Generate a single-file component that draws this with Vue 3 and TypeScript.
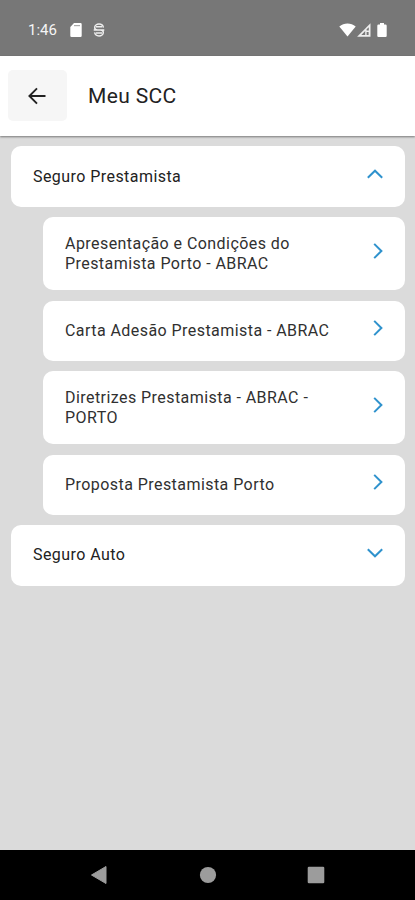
<script setup lang="ts">
import { ref } from 'vue'

interface Group {
  title: string
  items: string[]
}

const groups: Group[] = [
  {
    title: 'Seguro Prestamista',
    items: [
      'Apresentação e Condições do Prestamista Porto - ABRAC',
      'Carta Adesão Prestamista - ABRAC',
      'Diretrizes Prestamista - ABRAC - PORTO',
      'Proposta Prestamista Porto',
    ],
  },
  { title: 'Seguro Auto', items: [] },
]

const openIndex = ref<number>(0)

function toggle(index: number): void {
  openIndex.value = openIndex.value === index ? -1 : index
}
</script>

<template>
  <div class="screen">
    <div class="status">
      <span class="time">1:46</span>
      <svg class="sd" viewBox="0 0 12 14"><path d="M4 0h6.500a1.200 1.200 0 0 1 1.200 1.200v11.600a1.200 1.200 0 0 1-1.200 1.200h-9A1.200 1.200 0 0 1 .3 12.800V4z" fill="#fff" /><path d="M4 2.600h6" stroke="#aaa" stroke-width="1.200" /></svg>
      <svg class="app" viewBox="0 0 12 14" fill="none" stroke="#eee" stroke-width="1.500"><path d="M10.400 4.600C10 2.400 8.300 1.100 6 1.100S1.700 2.500 1.700 4.400C1.700 6 2.800 6.900 4.500 6.900h3c1.700 0 2.800.9 2.800 2.500 0 2-1.900 3.500-4.300 3.500s-4-1.400-4.400-3.500M.7 6.900h10.600M3 3.800h6M3 10.100h6" /></svg>
      <span class="spacer"></span>
      <svg class="wifi" viewBox="0 0 17 14"><path d="M.3 3.500C5-.6 12-.6 16.700 3.500L8.500 13.600z" fill="#fff" /></svg>
      <svg class="signal" viewBox="0 0 14 14"><path d="M13.500.3v13.400H.1z" fill="#eee" /><path d="M8.200 8v4H4.300zM9.600 6.300l2.200-2v3.300H9.600zM9.600 9h2v3h-2z" fill="#777" /></svg>
      <svg class="battery" viewBox="0 0 10 14"><path d="M3 0h4v1.500h1.500A1.200 1.200 0 0 1 9.700 2.700v10A1.200 1.200 0 0 1 8.500 14h-7A1.200 1.200 0 0 1 .3 12.700v-10A1.200 1.200 0 0 1 1.500 1.500H3z" fill="#fff" /></svg>
    </div>

    <header class="header">
      <button class="back" aria-label="Voltar">
        <svg viewBox="0 0 18 18" fill="none" stroke="#222" stroke-width="1.900"><path d="M17.500 9H1.600M9 1.300L1.400 9 9 16.700" /></svg>
      </button>
      <h1>Meu SCC</h1>
    </header>

    <main class="list">
      <template v-for="(group, i) in groups" :key="group.title">
        <button class="card" @click="toggle(i)">
          <span class="label">{{ group.title }}</span>
          <svg class="fold" viewBox="0 0 16 10" fill="none" stroke="#2f92cd" stroke-width="2">
            <path :d="openIndex === i ? 'M.8 8.700L8 1.700l7.200 7' : 'M.8 1.300L8 8.300l7.200-7'" />
          </svg>
        </button>
        <template v-if="openIndex === i">
          <button v-for="item in group.items" :key="item" class="card sub">
            <span class="label">{{ item }}</span>
            <svg class="go" viewBox="0 0 10 16" fill="none" stroke="#2f92cd" stroke-width="2"><path d="M1.200.9L8.400 8l-7.200 7.100" /></svg>
          </button>
        </template>
      </template>
    </main>

    <nav class="nav">
      <svg viewBox="0 0 18 18"><path d="M16 .5v17L1.500 9z" fill="#9c9c9c" stroke="#9c9c9c" stroke-linejoin="round" /></svg>
      <svg viewBox="0 0 18 18"><circle cx="9" cy="9" r="8.100" fill="#9c9c9c" /></svg>
      <svg viewBox="0 0 18 18"><rect x=".7" y=".7" width="16.600" height="16.600" rx="1.300" fill="#9c9c9c" /></svg>
    </nav>
  </div>
</template>

<style>
body {
  margin: 0;
}
</style>

<style scoped>
.screen {
  display: flex;
  flex-direction: column;
  height: 900px;
  background: #dbdbdb;
  font-family: Roboto, 'Liberation Sans', sans-serif;
  color: #222;
}
svg {
  display: block;
  flex: none;
}
button {
  border: 0;
  font: inherit;
  color: inherit;
  text-align: left;
}
.status {
  display: flex;
  align-items: center;
  box-sizing: border-box;
  height: 56px;
  padding: 4px 28px 0;
  background: #777;
  color: #f5f5f5;
}
.time {
  width: 42px;
  font-size: 15px;
  line-height: 18px;
}
.sd {
  width: 12px;
  height: 14px;
}
.app {
  width: 12px;
  height: 14px;
  margin-left: 11px;
}
.spacer {
  flex: 1;
}
.wifi {
  width: 17px;
  height: 14px;
}
.signal {
  width: 14px;
  height: 14px;
  margin-left: 1px;
}
.battery {
  width: 10px;
  height: 14px;
  margin-left: 6px;
}
.header {
  display: flex;
  align-items: center;
  box-sizing: border-box;
  height: 80px;
  padding: 0 8px 1px;
  background: #fff;
  box-shadow: 0 1px 2px rgba(0, 0, 0, 0.45);
}
.back {
  display: flex;
  align-items: center;
  justify-content: center;
  width: 59px;
  height: 51px;
  padding: 0 2px 0 0;
  border-radius: 5px;
  background: #f6f6f6;
}
.back svg {
  width: 18px;
  height: 18px;
}
h1 {
  margin: 0 0 0 21px;
  font-size: 21px;
  font-weight: 400;
  line-height: 26px;
  letter-spacing: 0.350px;
}
.list {
  display: flex;
  flex: 1;
  flex-direction: column;
  gap: 10.200px;
  padding: 10.400px 10px 0 11px;
}
.card {
  display: flex;
  align-items: center;
  justify-content: space-between;
  box-sizing: border-box;
  min-height: 60.400px;
  padding: 16.700px 22px;
  border-radius: 10px;
  background: #fff;
}
.sub {
  margin-left: 32px;
  color: #303030;
}
.label {
  max-width: 272px;
  font-size: 16px;
  line-height: 20px;
  letter-spacing: 0.440px;
}
.fold {
  width: 16px;
  height: 10px;
  margin-bottom: 5px;
}
.go {
  width: 10px;
  height: 16px;
  margin-bottom: 5px;
}
.nav {
  display: flex;
  align-items: center;
  justify-content: space-between;
  box-sizing: border-box;
  height: 50px;
  padding: 0 90px 0 90px;
  background: #000;
}
.nav svg {
  width: 18px;
  height: 18px;
}
</style>
